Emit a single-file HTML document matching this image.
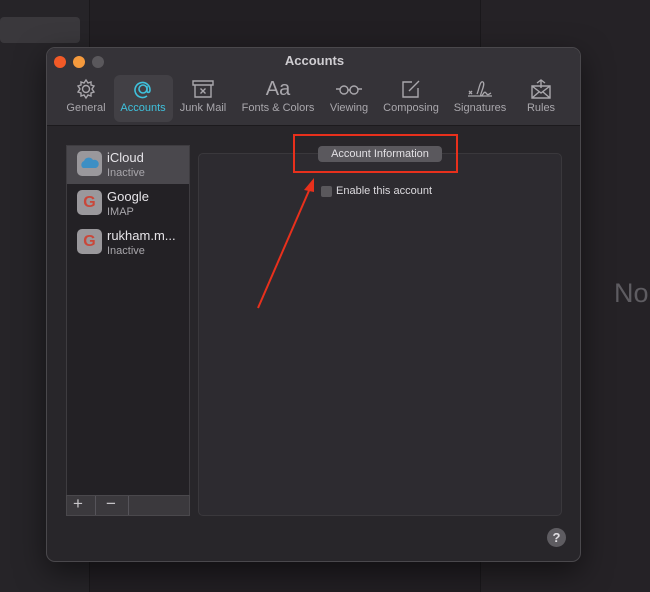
<!DOCTYPE html>
<html><head><style>
*{margin:0;padding:0;box-sizing:border-box}
body{width:650px;height:592px;background:#221f23;position:relative;overflow:hidden;font-family:"Liberation Sans",sans-serif;}
.abs{position:absolute}
.tb{position:absolute;top:78px;width:80px;text-align:center;font-size:11px;color:#a9a7ac}
.tb svg{display:block;margin:0 auto 2px}
</style></head><body>
<div class="abs" style="left:0;top:0;width:90px;height:592px;background:#262428;border-right:1px solid #1a181b"></div>
<div class="abs" style="left:0;top:17px;width:80px;height:26px;background:#3a383c;border-radius:4px"></div>
<div class="abs" style="left:480px;top:0;width:1px;height:592px;background:#1a181b"></div>
<div class="abs" style="left:481px;top:0;width:169px;height:592px;background:#252226"></div>
<div class="abs" style="left:614px;top:278px;font-size:27px;color:#5e5c61">No</div>

<div class="abs" style="left:46px;top:47px;width:535px;height:515px;background:#28262a;border:1px solid #4a484c;border-radius:9px;overflow:hidden;box-shadow:0 10px 30px rgba(0,0,0,.5)">
 <div class="abs" style="left:0;top:0;width:535px;height:78px;background:#353338;border-bottom:1px solid #1c1a1d"></div>
 <div class="abs" style="left:7px;top:8px;width:12px;height:12px;border-radius:50%;background:#f25a27"></div>
 <div class="abs" style="left:26px;top:8px;width:12px;height:12px;border-radius:50%;background:#f59a3d"></div>
 <div class="abs" style="left:45px;top:8px;width:12px;height:12px;border-radius:50%;background:#5a585c"></div>
 <div class="abs" style="left:0;top:5px;width:535px;text-align:center;font-size:13px;font-weight:bold;color:#cfcdd1">Accounts</div>
 <div class="abs" style="left:67px;top:27px;width:59px;height:47px;background:#424045;border-radius:6px"></div>
</div>
<div class="tb" style="left:46px"><svg width="22" height="22" viewBox="0 0 22 22" fill="none" stroke="#a9a7ac" stroke-width="1.4"><circle cx="11" cy="11" r="3.5"/><path d="M11 2l2 3 3-1 0 3 3 1-2 3 2 3-3 1 0 3-3-1-2 3-2-3-3 1 0-3-3-1 2-3-2-3 3-1 0-3 3 1z"/></svg>General</div>
<div class="tb" style="left:103px;color:#3fc1dc"><svg width="22" height="22" viewBox="0 0 22 22" fill="none" stroke="#3fc1dc" stroke-width="1.6"><circle cx="11" cy="11" r="4"/><path d="M15 8v5c0 2 3 2 3-1a7.5 7.5 0 1 0-3 6"/></svg>Accounts</div>
<div class="tb" style="left:163px"><svg width="24" height="22" viewBox="0 0 24 22" fill="none" stroke="#a9a7ac" stroke-width="1.4"><path d="M2 3h20v4H2zM4 7v12h16V7M9.5 10.5l5 5M14.5 10.5l-5 5"/></svg>Junk Mail</div>
<div class="tb" style="left:238px;width:80px"><div style="font-size:20px;height:24px;line-height:22px">Aa</div>Fonts &amp; Colors</div>
<div class="tb" style="left:309px"><svg width="28" height="22" viewBox="0 0 28 22" fill="none" stroke="#a9a7ac" stroke-width="1.4"><circle cx="9" cy="12" r="4"/><circle cx="19" cy="12" r="4"/><path d="M13 12h2M1 11h4M23 11h4"/></svg>Viewing</div>
<div class="tb" style="left:371px"><svg width="22" height="22" viewBox="0 0 22 22" fill="none" stroke="#a9a7ac" stroke-width="1.4"><path d="M12 4H3v15h15v-9M9 13l10-10"/></svg>Composing</div>
<div class="tb" style="left:440px"><svg width="30" height="22" viewBox="0 0 30 22" fill="none" stroke="#a9a7ac" stroke-width="1.3"><path d="M3 18h24M4 13l3 3M7 13l-3 3M12 16c2-4 3-14 6-12s-4 14-2 14 3-6 5-3 3 1 5 0"/></svg>Signatures</div>
<div class="tb" style="left:501px"><svg width="24" height="22" viewBox="0 0 24 22" fill="none" stroke="#a9a7ac" stroke-width="1.4"><path d="M3 8h18v12H3zM3 8l9 7 9-7M3 20l7-6M21 20l-7-6M12 10V2M8 5l4-3 4 3"/></svg>Rules</div>

<div class="abs" style="left:66px;top:145px;width:124px;height:371px;background:#232125;border:1px solid #3e3c40"></div>
<div class="abs" style="left:67px;top:146px;width:122px;height:38px;background:#4a484d"></div>
<div class="abs" style="left:77px;top:151px;width:25px;height:25px;border-radius:5px;background:#9a989c"><svg width="25" height="25" viewBox="0 0 25 25"><path d="M6 17a4 4 0 0 1 1-7 5 5 0 0 1 9-1 4 4 0 0 1 3 8z" fill="#3d8fc4"/></svg></div>
<div class="abs" style="left:107px;top:150px;font-size:13px;color:#e6e4e8">iCloud</div>
<div class="abs" style="left:107px;top:167px;font-size:11px;color:#a8a6ab">Inactive</div>
<div class="abs" style="left:77px;top:190px;width:25px;height:25px;border-radius:5px;background:#9a989c;color:#c9473a;font-weight:bold;font-size:16px;text-align:center;line-height:25px">G</div>
<div class="abs" style="left:107px;top:189px;font-size:13px;color:#e6e4e8">Google</div>
<div class="abs" style="left:107px;top:206px;font-size:11px;color:#a8a6ab">IMAP</div>
<div class="abs" style="left:77px;top:229px;width:25px;height:25px;border-radius:5px;background:#9a989c;color:#c9473a;font-weight:bold;font-size:16px;text-align:center;line-height:25px">G</div>
<div class="abs" style="left:107px;top:228px;font-size:13px;color:#e6e4e8">rukham.m...</div>
<div class="abs" style="left:107px;top:245px;font-size:11px;color:#a8a6ab">Inactive</div>
<div class="abs" style="left:66px;top:495px;width:124px;height:21px;background:#3b393d;border:1px solid #4a484c"></div>
<div class="abs" style="left:95px;top:496px;width:1px;height:19px;background:#56545a"></div>
<div class="abs" style="left:128px;top:496px;width:1px;height:19px;background:#56545a"></div>
<div class="abs" style="left:73px;top:494px;font-size:17px;color:#c8c6ca">+</div>
<div class="abs" style="left:106px;top:494px;font-size:17px;color:#c8c6ca">−</div>

<div class="abs" style="left:198px;top:153px;width:364px;height:363px;background:#2d2b30;border:1px solid #3a383c;border-radius:5px"></div>
<div class="abs" style="left:318px;top:146px;width:124px;height:16px;background:#5a585d;border-radius:4px;font-size:11px;color:#e2e0e4;text-align:center;line-height:16px">Account Information</div>
<div class="abs" style="left:293px;top:134px;width:165px;height:39px;border:2px solid #e8301c"></div>
<div class="abs" style="left:321px;top:186px;width:11px;height:11px;background:#5a585c;border-radius:2px"></div>
<div class="abs" style="left:336px;top:185px;font-size:11px;color:#dcdade">Enable this account</div>
<svg class="abs" style="left:0;top:0" width="650" height="592"><path d="M258 308L311 186" stroke="#e8301c" stroke-width="2"/><path d="M314 178L304 190L314 192z" fill="#e8301c"/></svg>
<div class="abs" style="left:547px;top:528px;width:19px;height:19px;border-radius:50%;background:#5e5c61;color:#e0dee2;font-weight:bold;font-size:13px;text-align:center;line-height:19px">?</div>
</body></html>
